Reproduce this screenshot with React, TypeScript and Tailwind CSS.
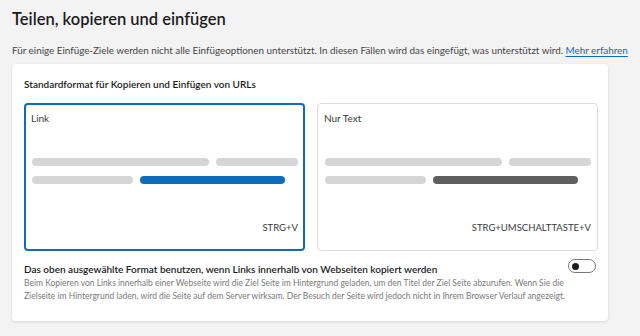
const font = { fontFamily: 'Lato, "Noto Sans", sans-serif' };

function Bars({ accent }: { accent: string }) {
  return (
    <div className="flex flex-col gap-[10px]">
      <div className="flex gap-[7px]">
        <div className="h-[8px] w-[177px] rounded-full bg-[#d6d6d6]" />
        <div className="h-[8px] w-[82px] rounded-full bg-[#d6d6d6]" />
      </div>
      <div className="flex gap-[7px]">
        <div className="h-[8px] w-[101px] rounded-full bg-[#d6d6d6]" />
        <div className={`h-[8px] w-[145px] rounded-full ${accent}`} />
      </div>
    </div>
  );
}

function Option({
  label,
  keys,
  selected,
}: {
  label: string;
  keys: string;
  selected?: boolean;
}) {
  return (
    <div
      className={`flex h-[148px] flex-1 flex-col rounded-[4px] bg-white ${
        selected ? "border-2 border-[#0f6cbd] px-[5px] pt-[5px] pb-[14px]" : "border border-[#dcdcdc] px-[6px] pt-[6px] pb-[15px]"
      }`}
    >
      <div className="text-[10px] leading-[16px] text-[#3a3a3a]">{label}</div>
      <div className="mt-[32px] pl-[1px]">
        <Bars accent={selected ? "bg-[#0f6cbd]" : "bg-[#5f5f5f]"} />
      </div>
      <div className="mt-auto text-right text-[9.5px] leading-[14px] text-[#3a3a3a]">{keys}</div>
    </div>
  );
}

export default function App() {
  return (
    <div className="h-[336px] w-[640px] overflow-hidden bg-[#f3f3f3] px-[12px] pt-[9px]" style={font}>
      <h1 className="text-[16.5px] leading-[20px] font-semibold text-[#1b1b1b]">Teilen, kopieren und einfügen</h1>
      <p className="mt-[13px] whitespace-nowrap text-[9.85px] leading-[16px] text-[#444]">
        Für einige Einfüge-Ziele werden nicht alle Einfügeoptionen unterstützt. In diesen Fällen wird das eingefügt, was unterstützt wird.{" "}
        <a className="text-[#0f6cbd] underline underline-offset-2">Mehr erfahren</a>
      </p>
      <div className="mt-[6px] w-[596px] rounded-[4px] bg-white px-[12px] pt-[12px] pb-[18px] shadow-[0_1px_3px_rgba(0,0,0,0.12)]">
        <div className="text-[10px] leading-[16px] font-semibold text-[#1b1b1b]">
          Standardformat für Kopieren und Einfügen von URLs
        </div>
        <div className="mt-[11px] flex gap-[12px]">
          <Option label="Link" keys="STRG+V" selected />
          <Option label="Nur Text" keys="STRG+UMSCHALTTASTE+V" />
        </div>
        <div className="mt-[11px] flex items-start justify-between">
          <div className="min-w-0 flex-1 whitespace-nowrap">
            <div className="text-[10px] leading-[14px] font-semibold text-[#1b1b1b]">
              Das oben ausgewählte Format benutzen, wenn Links innerhalb von Webseiten kopiert werden
            </div>
            <div className="mt-[1px] text-[8.5px] leading-[13px] text-[#7a7a7a]">
              Beim Kopieren von Links innerhalb einer Webseite wird die Ziel Seite im Hintergrund geladen, um den Titel der Ziel Seite abzurufen. Wenn Sie die
              <br />
              Zielseite im Hintergrund laden, wird die Seite auf dem Server wirksam. Der Besuch der Seite wird jedoch nicht in Ihrem Browser Verlauf angezeigt.
            </div>
          </div>
          <div className="mt-[-3px] flex h-[14px] w-[28px] shrink-0 items-center rounded-full border border-[#7a7a7a] px-[3px]">
            <div className="h-[7px] w-[7px] rounded-full bg-[#1b1b1b]" />
          </div>
        </div>
      </div>
    </div>
  );
}
